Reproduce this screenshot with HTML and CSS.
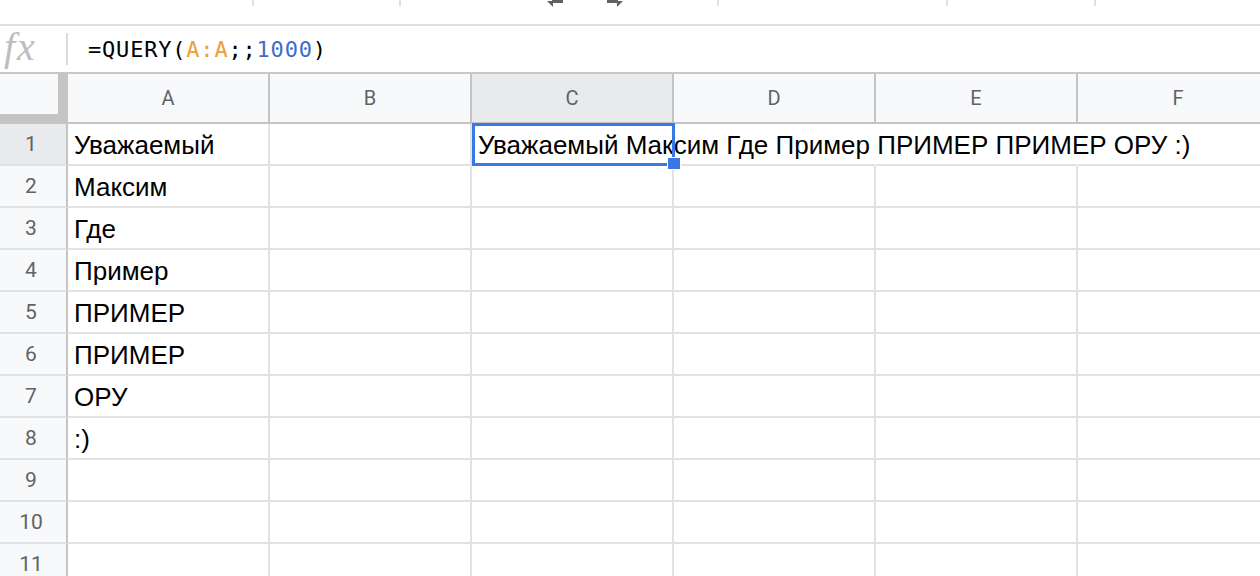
FILE: index.html
```html
<!DOCTYPE html>
<html lang="ru">
<head>
    <meta charset="UTF-8">
    <title>Таблица</title>
    <link rel="stylesheet" href="styles.css">
</head>
<body>
    <div class="toolbar">
        <span class="tb-sep s1"></span>
        <span class="tb-sep s2"></span>
        <svg class="tb-icon undo" width="16" height="8" viewBox="0 0 16 8">
            <path d="M0 1 L6 1 L6 7 Z" fill="#5f6368"/>
            <rect x="5" y="0" width="11" height="3" fill="#5f6368"/>
        </svg>
        <svg class="tb-icon redo" width="16" height="8" viewBox="0 0 16 8">
            <path d="M16 1 L10 1 L10 7 Z" fill="#5f6368"/>
            <rect x="0" y="0" width="11" height="3" fill="#5f6368"/>
        </svg>
        <span class="tb-sep s3"></span>
        <span class="tb-sep s4"></span>
        <span class="tb-sep s5"></span>
    </div>

    <div class="formula-bar">
        <div class="fx">fx</div>
        <div class="fx-divider"></div>
        <div class="formula">=QUERY(<span class="ref">A:A</span>;;<span class="num">1000</span>)</div>
    </div>

    <div class="sheet">
        <!-- header row -->
        <div class="corner"></div>
        <div class="col-head">A</div>
        <div class="col-head">B</div>
        <div class="col-head active">C</div>
        <div class="col-head">D</div>
        <div class="col-head">E</div>
        <div class="col-head">F</div>

        <div class="row-head active">1</div>
        <div class="cell">Уважаемый</div>
        <div class="cell"></div>
        <div class="cell spill selected">Уважаемый Максим Где Пример ПРИМЕР ПРИМЕР ОРУ :)<span class="sel-box"></span><span class="sel-handle"></span></div>
        <div class="cell spill"></div>
        <div class="cell spill"></div>
        <div class="cell"></div>

        <div class="row-head">2</div>
        <div class="cell">Максим</div>
        <div class="cell"></div><div class="cell"></div><div class="cell"></div><div class="cell"></div><div class="cell"></div>

        <div class="row-head">3</div>
        <div class="cell">Где</div>
        <div class="cell"></div><div class="cell"></div><div class="cell"></div><div class="cell"></div><div class="cell"></div>

        <div class="row-head">4</div>
        <div class="cell">Пример</div>
        <div class="cell"></div><div class="cell"></div><div class="cell"></div><div class="cell"></div><div class="cell"></div>

        <div class="row-head">5</div>
        <div class="cell">ПРИМЕР</div>
        <div class="cell"></div><div class="cell"></div><div class="cell"></div><div class="cell"></div><div class="cell"></div>

        <div class="row-head">6</div>
        <div class="cell">ПРИМЕР</div>
        <div class="cell"></div><div class="cell"></div><div class="cell"></div><div class="cell"></div><div class="cell"></div>

        <div class="row-head">7</div>
        <div class="cell">ОРУ</div>
        <div class="cell"></div><div class="cell"></div><div class="cell"></div><div class="cell"></div><div class="cell"></div>

        <div class="row-head">8</div>
        <div class="cell">:)</div>
        <div class="cell"></div><div class="cell"></div><div class="cell"></div><div class="cell"></div><div class="cell"></div>

        <div class="row-head">9</div>
        <div class="cell"></div><div class="cell"></div><div class="cell"></div><div class="cell"></div><div class="cell"></div><div class="cell"></div>

        <div class="row-head">10</div>
        <div class="cell"></div><div class="cell"></div><div class="cell"></div><div class="cell"></div><div class="cell"></div><div class="cell"></div>

        <div class="row-head">11</div>
        <div class="cell"></div><div class="cell"></div><div class="cell"></div><div class="cell"></div><div class="cell"></div><div class="cell"></div>
    </div>
</body>
</html>
```

FILE: styles.css
```css
body {
    margin: 0;
    padding: 0;
    background: #fff;
    font-family: 'Liberation Sans', Arial, sans-serif;
    color: #000;
    overflow: hidden;
    width: 1260px;
    height: 576px;
}

.toolbar {
    position: relative;
    height: 24px;
    border-bottom: 2px solid #dedfe0;
}
.tb-sep {
    position: absolute;
    top: 0;
    width: 2px;
    height: 6px;
    background: #e0e0e0;
}
.s1 { left: 252px; }
.s2 { left: 399px; }
.s3 { left: 717px; }
.s4 { left: 946px; }
.s5 { left: 1094px; }
.tb-icon {
    position: absolute;
    top: 0;
}
.undo { left: 547px; }
.redo { left: 607px; }

.formula-bar {
    display: flex;
    align-items: center;
    height: 46px;
    border-bottom: 2px solid #c7c7c7;
}
.fx {
    width: 45px;
    padding-left: 4px;
    font-family: 'Liberation Serif', serif;
    font-style: italic;
    font-size: 40px;
    color: #bdbdbd;
    line-height: 1;
    margin-top: -4px;
    letter-spacing: 2px;
}
.fx-divider {
    width: 2px;
    height: 32px;
    background: #dcdcdc;
    margin-left: 17px;
    margin-right: 20px;
}
.formula {
    font-family: 'DejaVu Sans Mono', 'Liberation Mono', monospace;
    font-size: 22px;
    color: #000;
    letter-spacing: 0.8px;
}
.formula .ref { color: #eba03c; }
.formula .num { color: #3d6dcc; }

.sheet {
    display: grid;
    grid-template-columns: 68px repeat(6, 202px);
    grid-template-rows: 50px repeat(11, 42px);
}

.corner {
    background: #f8f9fa;
    border-right: 10px solid #c4c4c4;
    border-bottom: 10px solid #c4c4c4;
    box-sizing: border-box;
}
.col-head {
    background: #f8f9fa;
    border-right: 2px solid #c4c4c4;
    border-bottom: 2px solid #c4c4c4;
    box-sizing: border-box;
    display: flex;
    align-items: center;
    justify-content: center;
    font-family: Roboto, 'Liberation Sans', sans-serif;
    font-size: 20px;
    color: #5f6368;
}
.col-head.active,
.row-head.active {
    background: #e8eaed;
}
.row-head {
    background: #f8f9fa;
    border-right: 2px solid #c4c4c4;
    border-bottom: 2px solid #e2e2e2;
    box-sizing: border-box;
    display: flex;
    align-items: center;
    justify-content: center;
    font-family: Roboto, 'Liberation Sans', sans-serif;
    font-size: 21px;
    color: #5f6368;
    padding-right: 4px;
}
.cell {
    border-right: 2px solid #e2e2e2;
    border-bottom: 2px solid #e2e2e2;
    box-sizing: border-box;
    display: flex;
    align-items: center;
    padding: 2px 0 0 6px;
    font-size: 26px;
    white-space: nowrap;
}
.cell.spill {
    border-right-color: transparent;
}
.cell.selected {
    position: relative;
    overflow: visible;
    z-index: 2;
}
.sel-box {
    position: absolute;
    left: 0;
    top: -1px;
    width: 203px;
    height: 43px;
    border: 3px solid #3b78e7;
    box-sizing: border-box;
}
.sel-handle {
    position: absolute;
    left: 195px;
    top: 33px;
    width: 12px;
    height: 11px;
    background: #3b78e7;
    border: 1px solid #fff;
}
```
